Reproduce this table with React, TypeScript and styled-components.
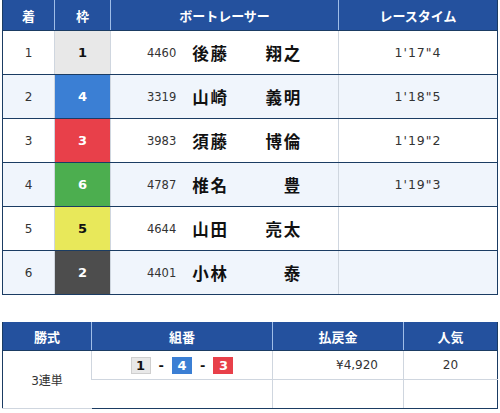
import React from 'react';
import styled, { createGlobalStyle } from 'styled-components';

const GlobalStyle = createGlobalStyle`
  html, body {
    margin: 0;
    padding: 0;
    background: #ffffff;
  }
  body {
    font-family: "DejaVu Sans", "Noto Sans CJK JP", sans-serif;
    color: #222;
  }
`;

const Page = styled.div`
  width: 500px;
  padding: 0 2px;
  box-sizing: border-box;
  display: flex;
  flex-direction: column;
  gap: 27px;
`;

const Table = styled.table`
  width: 100%;
  border-collapse: collapse;
  table-layout: fixed;
  border: 1px solid #1b3c63;
  border-top: none;
`;

const HeadCell = styled.th<{ $w?: number }>`
  width: ${(p) => (p.$w ? `${p.$w}px` : 'auto')};
  padding: 0;
  background: repeating-conic-gradient(#183f86 0 25%, #2f63b6 0 50%) 0 0 / 2px 2px;
  color: #fff;
  font-family: "Noto Sans CJK JP", sans-serif;
  font-weight: 700;
  font-size: 13px;
  text-align: center;
  border-left: 1px solid #9fbde8;
  border-bottom: 1px solid #1b3c63;
  &:first-child {
    border-left: none;
  }
`;

const HeadRow = styled.tr<{ $h: number }>`
  th {
    height: ${(p) => p.$h}px;
  }
`;

const BodyRow = styled.tr<{ $alt?: boolean }>`
  background: ${(p) => (p.$alt ? '#f0f5fc' : '#ffffff')};
  td {
    height: 43px;
    border-bottom: 1px solid #1b3c63;
  }
`;

const Cell = styled.td`
  padding: 0;
  text-align: center;
  font-size: 12px;
  color: #333;
  border-left: 1px solid #cfd6df;
  &:first-child {
    border-left: none;
  }
`;

const wakuColors: Record<number, { bg: string; fg: string }> = {
  1: { bg: '#e8e8e8', fg: '#111' },
  2: { bg: '#4d4d4d', fg: '#fff' },
  3: { bg: '#e8404a', fg: '#fff' },
  4: { bg: '#3b7fd4', fg: '#fff' },
  5: { bg: '#e8e85a', fg: '#111' },
  6: { bg: '#4cae4f', fg: '#fff' },
};

const WakuCell = styled(Cell)<{ $n: number }>`
  background: ${(p) => wakuColors[p.$n].bg};
  color: ${(p) => wakuColors[p.$n].fg};
  font-weight: 700;
  font-size: 13px;
`;

const Racer = styled.div`
  display: flex;
  align-items: center;
  justify-content: center;
  gap: 16px;
`;

const RegNo = styled.span`
  font-size: 11.5px;
  color: #333;
`;

const RacerName = styled.span`
  font-family: "Noto Sans CJK JP", sans-serif;
  font-weight: 700;
  font-size: 16.5px;
  letter-spacing: 1.8px;
  color: #111;
  white-space: pre;
`;

const TimeText = styled.span`
  font-size: 12.5px;
  letter-spacing: 1px;
  color: #333;
`;

const PayRow = styled.tr<{ $last?: boolean }>`
  td {
    height: 28px;
    border-bottom: 1px solid ${(p) => (p.$last ? '#1b3c63' : '#cfd6df')};
  }
`;

const PayCell = styled(Cell)<{ $align?: string }>`
  text-align: ${(p) => p.$align || 'center'};
  padding-right: ${(p) => (p.$align === 'right' ? '25px' : '0')};
  font-size: 12px;
  color: #333;
`;

const KindCell = styled(PayCell)`
  border-bottom: 1px solid #1b3c63;
`;

const Combo = styled.div`
  display: flex;
  align-items: center;
  justify-content: center;
  gap: 8px;
`;

const Box = styled.span<{ $n: number }>`
  display: inline-flex;
  align-items: center;
  justify-content: center;
  width: 20px;
  height: 17px;
  box-sizing: border-box;
  background: ${(p) => wakuColors[p.$n].bg};
  color: ${(p) => wakuColors[p.$n].fg};
  border: ${(p) => (p.$n === 1 ? '1px solid #cfcfcf' : 'none')};
  font-weight: 700;
  font-size: 13px;
`;

const Dash = styled.span`
  font-weight: 700;
  font-size: 13px;
  color: #111;
`;

const results = [
  { rank: 1, waku: 1, reg: '4460', name: '後藤　　翔之', time: `1'17"4` },
  { rank: 2, waku: 4, reg: '3319', name: '山崎　　義明', time: `1'18"5` },
  { rank: 3, waku: 3, reg: '3983', name: '須藤　　博倫', time: `1'19"2` },
  { rank: 4, waku: 6, reg: '4787', name: '椎名　　　豊', time: `1'19"3` },
  { rank: 5, waku: 5, reg: '4644', name: '山田　　亮太', time: '' },
  { rank: 6, waku: 2, reg: '4401', name: '小林　　　泰', time: '' },
];

export default function App() {
  return (
    <>
      <GlobalStyle />
      <Page>
        <Table>
          <thead>
            <HeadRow $h={30}>
              <HeadCell $w={51}>着</HeadCell>
              <HeadCell $w={55}>枠</HeadCell>
              <HeadCell $w={227}>ボートレーサー</HeadCell>
              <HeadCell>レースタイム</HeadCell>
            </HeadRow>
          </thead>
          <tbody>
            {results.map((r, i) => (
              <BodyRow key={r.rank} $alt={i % 2 === 1}>
                <Cell>{r.rank}</Cell>
                <WakuCell $n={r.waku}>{r.waku}</WakuCell>
                <Cell>
                  <Racer>
                    <RegNo>{r.reg}</RegNo>
                    <RacerName>{r.name}</RacerName>
                  </Racer>
                </Cell>
                <Cell>
                  <TimeText>{r.time}</TimeText>
                </Cell>
              </BodyRow>
            ))}
          </tbody>
        </Table>

        <Table>
          <thead>
            <HeadRow $h={28}>
              <HeadCell $w={88}>勝式</HeadCell>
              <HeadCell $w={180}>組番</HeadCell>
              <HeadCell $w={130}>払戻金</HeadCell>
              <HeadCell>人気</HeadCell>
            </HeadRow>
          </thead>
          <tbody>
            <PayRow>
              <KindCell rowSpan={2}>3連単</KindCell>
              <PayCell>
                <Combo>
                  <Box $n={1}>1</Box>
                  <Dash>-</Dash>
                  <Box $n={4}>4</Box>
                  <Dash>-</Dash>
                  <Box $n={3}>3</Box>
                </Combo>
              </PayCell>
              <PayCell $align="right">¥4,920</PayCell>
              <PayCell>20</PayCell>
            </PayRow>
            <PayRow $last>
              <PayCell />
              <PayCell />
              <PayCell />
            </PayRow>
          </tbody>
        </Table>
      </Page>
    </>
  );
}
